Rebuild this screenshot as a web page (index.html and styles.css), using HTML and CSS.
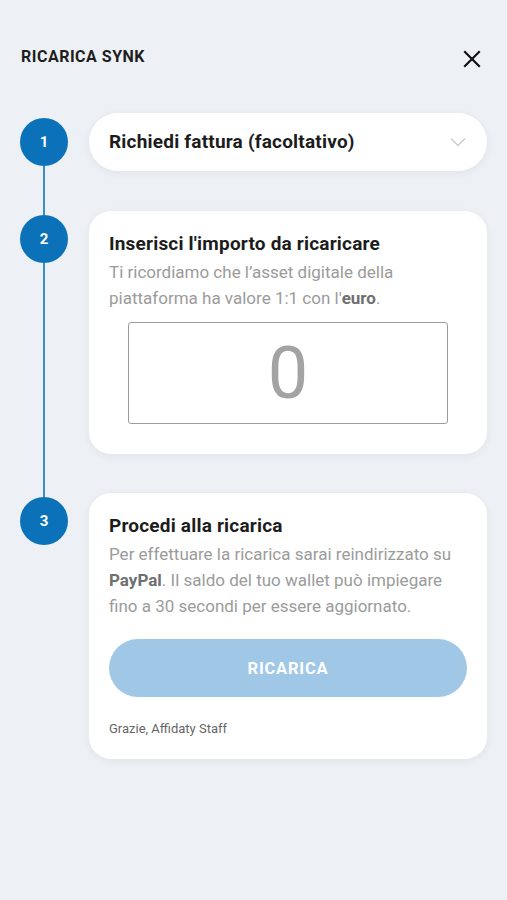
FILE: index.html
```html
<!DOCTYPE html>
<html>
<head>
    <title>Ricarica Synk</title>
    <link rel="stylesheet" href="styles.css">
</head>
<body>
    <div class="header">
        <h1>RICARICA SYNK</h1>
        <svg class="close" width="18" height="18" viewBox="0 0 18 18">
            <path d="M2 2 L16 16 M16 2 L2 16" stroke="#111" stroke-width="2.2" stroke-linecap="square"/>
        </svg>
    </div>

    <div class="steps">
        <div class="step first">
            <div class="rail"><span class="stub"></span><span class="num">1</span><span class="line"></span></div>
            <div class="card pill">
                <span class="card-title">Richiedi fattura (facoltativo)</span>
                <svg class="chevron" width="16" height="10" viewBox="0 0 16 10">
                    <path d="M1 1.5 L8 8.5 L15 1.5" fill="none" stroke="#c9cdd2" stroke-width="1.5"/>
                </svg>
            </div>
        </div>

        <div class="step">
            <div class="rail"><span class="stub"></span><span class="num">2</span><span class="line"></span></div>
            <div class="card">
                <div class="card-title">Inserisci l'importo da ricaricare</div>
                <p class="desc">Ti ricordiamo che l’asset digitale della piattaforma ha valore 1:1 con l'<b>euro</b>.</p>
                <div class="amount">0</div>
            </div>
        </div>

        <div class="step last">
            <div class="rail"><span class="stub"></span><span class="num">3</span><span class="line"></span></div>
            <div class="card">
                <div class="card-title">Procedi alla ricarica</div>
                <p class="desc">Per effettuare la ricarica sarai reindirizzato su <b>PayPal</b>. Il saldo del tuo wallet può impiegare fino a 30 secondi per essere aggiornato.</p>
                <button class="btn" disabled>RICARICA</button>
                <div class="thanks">Grazie, Affidaty Staff</div>
            </div>
        </div>
    </div>
</body>
</html>
```

FILE: styles.css
```css
body {
    margin: 0;
    background: #edf1f5;
    font-family: Roboto, "Noto Sans", Arial, sans-serif;
    color: #1c1c1c;
    width: 507px;
    height: 900px;
}
.header {
    display: flex;
    justify-content: space-between;
    align-items: center;
    padding: 46px 26px 0 21px;
    height: 22px;
}
h1 {
    margin: 0;
    font-size: 16px;
    font-weight: 700;
    line-height: 22px;
    letter-spacing: 0.5px;
    color: #1e1e1e;
}
.close {
    margin-top: 4px;
}
.steps {
    margin-top: 45px;
    padding: 0 20px;
}
.step {
    display: flex;
    gap: 21px;
}
.step .card {
    margin-bottom: 40px;
}
.step:nth-child(2) .card {
    margin-bottom: 39px;
}
.step.last .card {
    margin-bottom: 0;
}
.rail {
    width: 48px;
    flex: none;
    display: flex;
    flex-direction: column;
    align-items: center;
}
.stub {
    width: 2px;
    height: 4px;
    background: #3a8ccb;
}
.first .stub {
    height: 5px;
    background: transparent;
}
.line {
    width: 2px;
    flex: 1;
    background: #3a8ccb;
}
.last .line {
    background: transparent;
}
.num {
    width: 48px;
    height: 48px;
    border-radius: 50%;
    background: #0b71b9;
    color: #fff;
    font-size: 15px;
    font-weight: 700;
    display: flex;
    align-items: center;
    justify-content: center;
}
.card {
    flex: 1;
    background: #fff;
    border-radius: 22px;
    padding: 22px 20px 30px;
    box-shadow: 0 2px 10px rgba(0,0,0,0.06);
}
.card.pill {
    height: 58px;
    box-sizing: border-box;
    border-radius: 29px;
    padding: 0 21px 0 20px;
    display: flex;
    align-items: center;
    justify-content: space-between;
}
.card-title {
    font-size: 19px;
    font-weight: 700;
    line-height: 22px;
    letter-spacing: 0.2px;
    color: #1c1c1c;
}
.desc {
    margin: 4px 0 0;
    font-size: 17px;
    line-height: 26px;
    color: #9b9b9b;
}
.desc b {
    color: #6f6f6f;
}
.amount {
    margin: 11px 19px 0;
    height: 100px;
    border: 1px solid #9c9c9c;
    border-radius: 3px;
    display: flex;
    align-items: center;
    justify-content: center;
    font-size: 72px;
    font-weight: 400;
    color: #a3a3a3;
}
.last .card {
    padding-bottom: 22px;
}
.btn {
    display: block;
    width: 100%;
    height: 58px;
    margin-top: 20px;
    border: none;
    border-radius: 29px;
    background: #a0c8e6;
    color: #fff;
    font-family: inherit;
    font-size: 16.5px;
    font-weight: 700;
    letter-spacing: 0.8px;
}
.thanks {
    margin-top: 24px;
    font-size: 13px;
    line-height: 16px;
    color: #666;
}
```
